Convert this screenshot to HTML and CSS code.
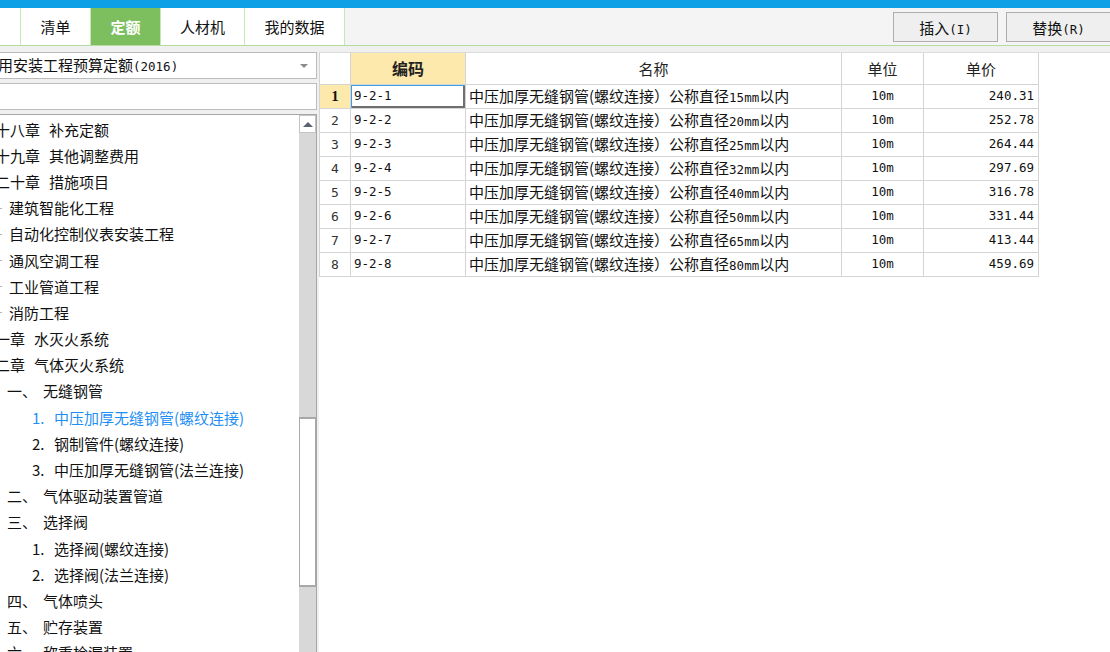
FILE: index.html
```html
<!DOCTYPE html>
<html lang="zh-CN">
<head>
<meta charset="utf-8">
<title>定额</title>
<link rel="stylesheet" href="styles.css">
</head>
<body>
<div class="topbar"></div>
<div class="toolbar">
  <div class="tabs">
    <div class="tab tab-blank"></div>
    <div class="tab">清单</div>
    <div class="tab tab-active">定额</div>
    <div class="tab tab-md">人材机</div>
    <div class="tab tab-lg">我的数据</div>
  </div>
  <div class="actions">
    <button class="btn">插入<span class="mono">(I)</span></button>
    <button class="btn">替换<span class="mono">(R)</span></button>
  </div>
</div>
<div class="main">
  <aside class="side">
    <div class="select"><span class="select-text">通用安装工程预算定额<span class="mono">(2016)</span></span><span class="caret"></span></div>
    <div class="search"></div>
    <div class="tree">
      <ul class="tree-list">
        <li class="node lv-ch"><span class="pre">第十八章</span><span>补充定额</span></li>
        <li class="node lv-ch"><span class="pre">第十九章</span><span>其他调整费用</span></li>
        <li class="node lv-ch"><span class="pre">第二十章</span><span>措施项目</span></li>
        <li class="node lv-vol"><span>建筑智能化工程</span></li>
        <li class="node lv-vol"><span>自动化控制仪表安装工程</span></li>
        <li class="node lv-vol"><span>通风空调工程</span></li>
        <li class="node lv-vol"><span>工业管道工程</span></li>
        <li class="node lv-vol"><span>消防工程</span></li>
        <li class="node lv-ch"><span class="pre">第一章</span><span>水灭火系统</span></li>
        <li class="node lv-ch"><span class="pre">第二章</span><span>气体灭火系统</span></li>
        <li class="node lv-sec"><span class="pre">一、</span><span>无缝钢管</span></li>
        <li class="node lv-sub is-selected"><span class="pre">1.</span><span>中压加厚无缝钢管(螺纹连接)</span></li>
        <li class="node lv-sub"><span class="pre">2.</span><span>钢制管件(螺纹连接)</span></li>
        <li class="node lv-sub"><span class="pre">3.</span><span>中压加厚无缝钢管(法兰连接)</span></li>
        <li class="node lv-sec"><span class="pre">二、</span><span>气体驱动装置管道</span></li>
        <li class="node lv-sec"><span class="pre">三、</span><span>选择阀</span></li>
        <li class="node lv-sub"><span class="pre">1.</span><span>选择阀(螺纹连接)</span></li>
        <li class="node lv-sub"><span class="pre">2.</span><span>选择阀(法兰连接)</span></li>
        <li class="node lv-sec"><span class="pre">四、</span><span>气体喷头</span></li>
        <li class="node lv-sec"><span class="pre">五、</span><span>贮存装置</span></li>
        <li class="node lv-sec"><span class="pre">六、</span><span>称重检漏装置</span></li>
      </ul>
      <div class="scrollbar">
        <div class="sb-up"><span class="sb-arrow"></span></div>
        <div class="sb-track-top"></div>
        <div class="sb-thumb"></div>
        <div class="sb-track-bottom"></div>
      </div>
    </div>
  </aside>
  <section class="content">
    <div class="grid-wrap">
      <table class="grid">
        <colgroup>
          <col class="c-no"><col class="c-code"><col class="c-name"><col class="c-unit"><col class="c-price">
        </colgroup>
        <thead>
          <tr>
            <th></th>
            <th class="h-active">编码</th>
            <th>名称</th>
            <th>单位</th>
            <th>单价</th>
          </tr>
        </thead>
        <tbody>
          <tr><td class="no no-active">1</td><td class="code sel">9-2-1</td><td class="name">中压加厚无缝钢管(螺纹连接）公称直径<span class="mono">15mm</span>以内</td><td class="unit">10m</td><td class="price">240.31</td></tr>
          <tr><td class="no">2</td><td class="code">9-2-2</td><td class="name">中压加厚无缝钢管(螺纹连接）公称直径<span class="mono">20mm</span>以内</td><td class="unit">10m</td><td class="price">252.78</td></tr>
          <tr><td class="no">3</td><td class="code">9-2-3</td><td class="name">中压加厚无缝钢管(螺纹连接）公称直径<span class="mono">25mm</span>以内</td><td class="unit">10m</td><td class="price">264.44</td></tr>
          <tr><td class="no">4</td><td class="code">9-2-4</td><td class="name">中压加厚无缝钢管(螺纹连接）公称直径<span class="mono">32mm</span>以内</td><td class="unit">10m</td><td class="price">297.69</td></tr>
          <tr><td class="no">5</td><td class="code">9-2-5</td><td class="name">中压加厚无缝钢管(螺纹连接）公称直径<span class="mono">40mm</span>以内</td><td class="unit">10m</td><td class="price">316.78</td></tr>
          <tr><td class="no">6</td><td class="code">9-2-6</td><td class="name">中压加厚无缝钢管(螺纹连接）公称直径<span class="mono">50mm</span>以内</td><td class="unit">10m</td><td class="price">331.44</td></tr>
          <tr><td class="no">7</td><td class="code">9-2-7</td><td class="name">中压加厚无缝钢管(螺纹连接）公称直径<span class="mono">65mm</span>以内</td><td class="unit">10m</td><td class="price">413.44</td></tr>
          <tr><td class="no">8</td><td class="code">9-2-8</td><td class="name">中压加厚无缝钢管(螺纹连接）公称直径<span class="mono">80mm</span>以内</td><td class="unit">10m</td><td class="price">459.69</td></tr>
        </tbody>
      </table>
    </div>
  </section>
</div>
</body>
</html>
```

FILE: styles.css
```css
* { box-sizing: border-box; }

body {
  margin: 0;
  width: 1110px;
  height: 652px;
  overflow: hidden;
  background: #f0f0f0;
  font-family: "Noto Sans CJK SC", "Noto Sans", sans-serif;
  font-size: 15px;
  color: #111;
}

.mono {
  font-family: "DejaVu Sans Mono", "Liberation Mono", monospace;
  font-size: 12.5px;
}

.topbar {
  height: 8px;
  background: #0ea0e6;
}

.toolbar {
  display: flex;
  justify-content: space-between;
  height: 38px;
  border-bottom: 1px solid #b5dda2;
  background: #f4f4f4;
}

.tabs {
  display: flex;
}

.tab {
  width: 70px;
  height: 37px;
  border-right: 1px solid #c6e7b6;
  background: #fff;
  display: flex;
  align-items: center;
  justify-content: center;
  line-height: 1;
  white-space: nowrap;
}

.tab-blank { width: 21px; }
.tab-md { width: 84px; }
.tab-lg { width: 100px; }

.tab-active {
  background: #7dbf5f;
  color: #fff;
  font-weight: bold;
}

.actions {
  display: flex;
  gap: 8px;
  padding-top: 4px;
  margin-right: -1px;
}

.btn {
  width: 105px;
  height: 30px;
  padding: 0;
  border: 1px solid #adadad;
  background: #efefef;
  font: inherit;
  font-size: 15px;
  color: #111;
}

.main {
  display: flex;
  height: 606px;
}

.side {
  width: 317px;
  flex: none;
  padding-top: 6px;
  display: flex;
  flex-direction: column;
  gap: 4px;
}

.select {
  height: 27px;
  border: 1px solid #bcbcbc;
  border-left: none;
  background: #fff;
  display: flex;
  align-items: center;
  justify-content: space-between;
  overflow: hidden;
}

.select-text {
  margin-left: -17px;
  white-space: nowrap;
  line-height: 1;
}

.caret {
  width: 0;
  height: 0;
  margin-right: 8px;
  border-left: 4px solid transparent;
  border-right: 4px solid transparent;
  border-top: 4px solid #8a8a8a;
}

.search {
  height: 27px;
  border: 1px solid #bcbcbc;
  border-left: none;
  background: #fff;
}

.tree {
  flex: 1;
  display: flex;
  border-top: 1px solid #a6a6a6;
  border-right: 1px solid #a6a6a6;
  background: #fff;
  overflow: hidden;
}

.tree-list {
  flex: 1;
  list-style: none;
  margin: 0;
  padding: 1px 0 0;
  overflow: hidden;
}

.node {
  height: 26.2px;
  display: flex;
  align-items: center;
  white-space: nowrap;
  line-height: 1;
  color: #111;
}

.lv-ch { margin-left: -20px; }
.lv-ch .pre { margin-right: 9px; }

.lv-vol { padding-left: 9px; position: relative; }
.lv-vol::before {
  content: "";
  position: absolute;
  left: 0;
  top: 50%;
  width: 2px;
  height: 1px;
  background: #b5b5b5;
}

.lv-sec { padding-left: 7px; }
.lv-sec .pre { width: 36px; }

.lv-sub { padding-left: 32px; }
.lv-sub .pre { width: 22px; }

.is-selected { color: #1f8ff5; }

.scrollbar {
  width: 17px;
  flex: none;
  background: #d8d8d8;
  display: flex;
  flex-direction: column;
}

.sb-up {
  height: 18px;
  background: #fff;
  border: 1px solid #c4c4c4;
  display: flex;
  align-items: center;
  justify-content: center;
}

.sb-arrow {
  width: 0;
  height: 0;
  border-left: 5px solid transparent;
  border-right: 5px solid transparent;
  border-bottom: 5px solid #5a6372;
}

.sb-track-top { height: 284px; }

.sb-thumb {
  height: 170px;
  background: #fff;
  border: 1px solid #a8a8a8;
  border-bottom-width: 2px;
  border-top-width: 2px;
}

.sb-track-bottom { flex: 1; }

.content {
  flex: 1;
  padding-top: 6px;
  padding-left: 2px;
}

.grid-wrap {
  height: 100%;
  background: #fff;
  border-top: 1px solid #dcdcdc;
}

.grid {
  border-collapse: collapse;
  table-layout: fixed;
  width: 719px;
}

.c-no { width: 31px; }
.c-code { width: 115px; }
.c-name { width: 376px; }
.c-unit { width: 82px; }
.c-price { width: 115px; }

.grid th,
.grid td {
  border: 1px solid #d4d4d4;
  padding: 0;
  white-space: nowrap;
  overflow: hidden;
  line-height: 1;
}

.grid th {
  height: 31px;
  font-weight: normal;
  text-align: center;
  color: #222;
  border-top: none;
}

.grid th.h-active {
  background: #fde9ab;
  font-weight: bold;
  font-size: 16px;
}

.grid td {
  height: 24px;
  font-size: 15px;
}

.grid td.no {
  text-align: center;
  color: #333;
  font-family: "DejaVu Sans Mono", monospace;
  font-size: 13px;
}

.grid td.no-active {
  background: #fde9ab;
  font-weight: bold;
  color: #111;
  font-family: "Liberation Serif", serif;
  font-size: 15px;
}

.grid td.code,
.grid td.unit,
.grid td.price {
  font-family: "DejaVu Sans Mono", "Liberation Mono", monospace;
  font-size: 12.5px;
}

.grid td.code { padding-left: 3px; }
.grid td.name { padding-left: 3px; }
.grid td.unit { text-align: center; }
.grid td.price { text-align: right; padding-right: 4px; }

.grid td.sel {
  box-shadow: inset 1px 1px 0 #3f9de0, inset -2px -2px 0 #6f6f6f;
}
```
